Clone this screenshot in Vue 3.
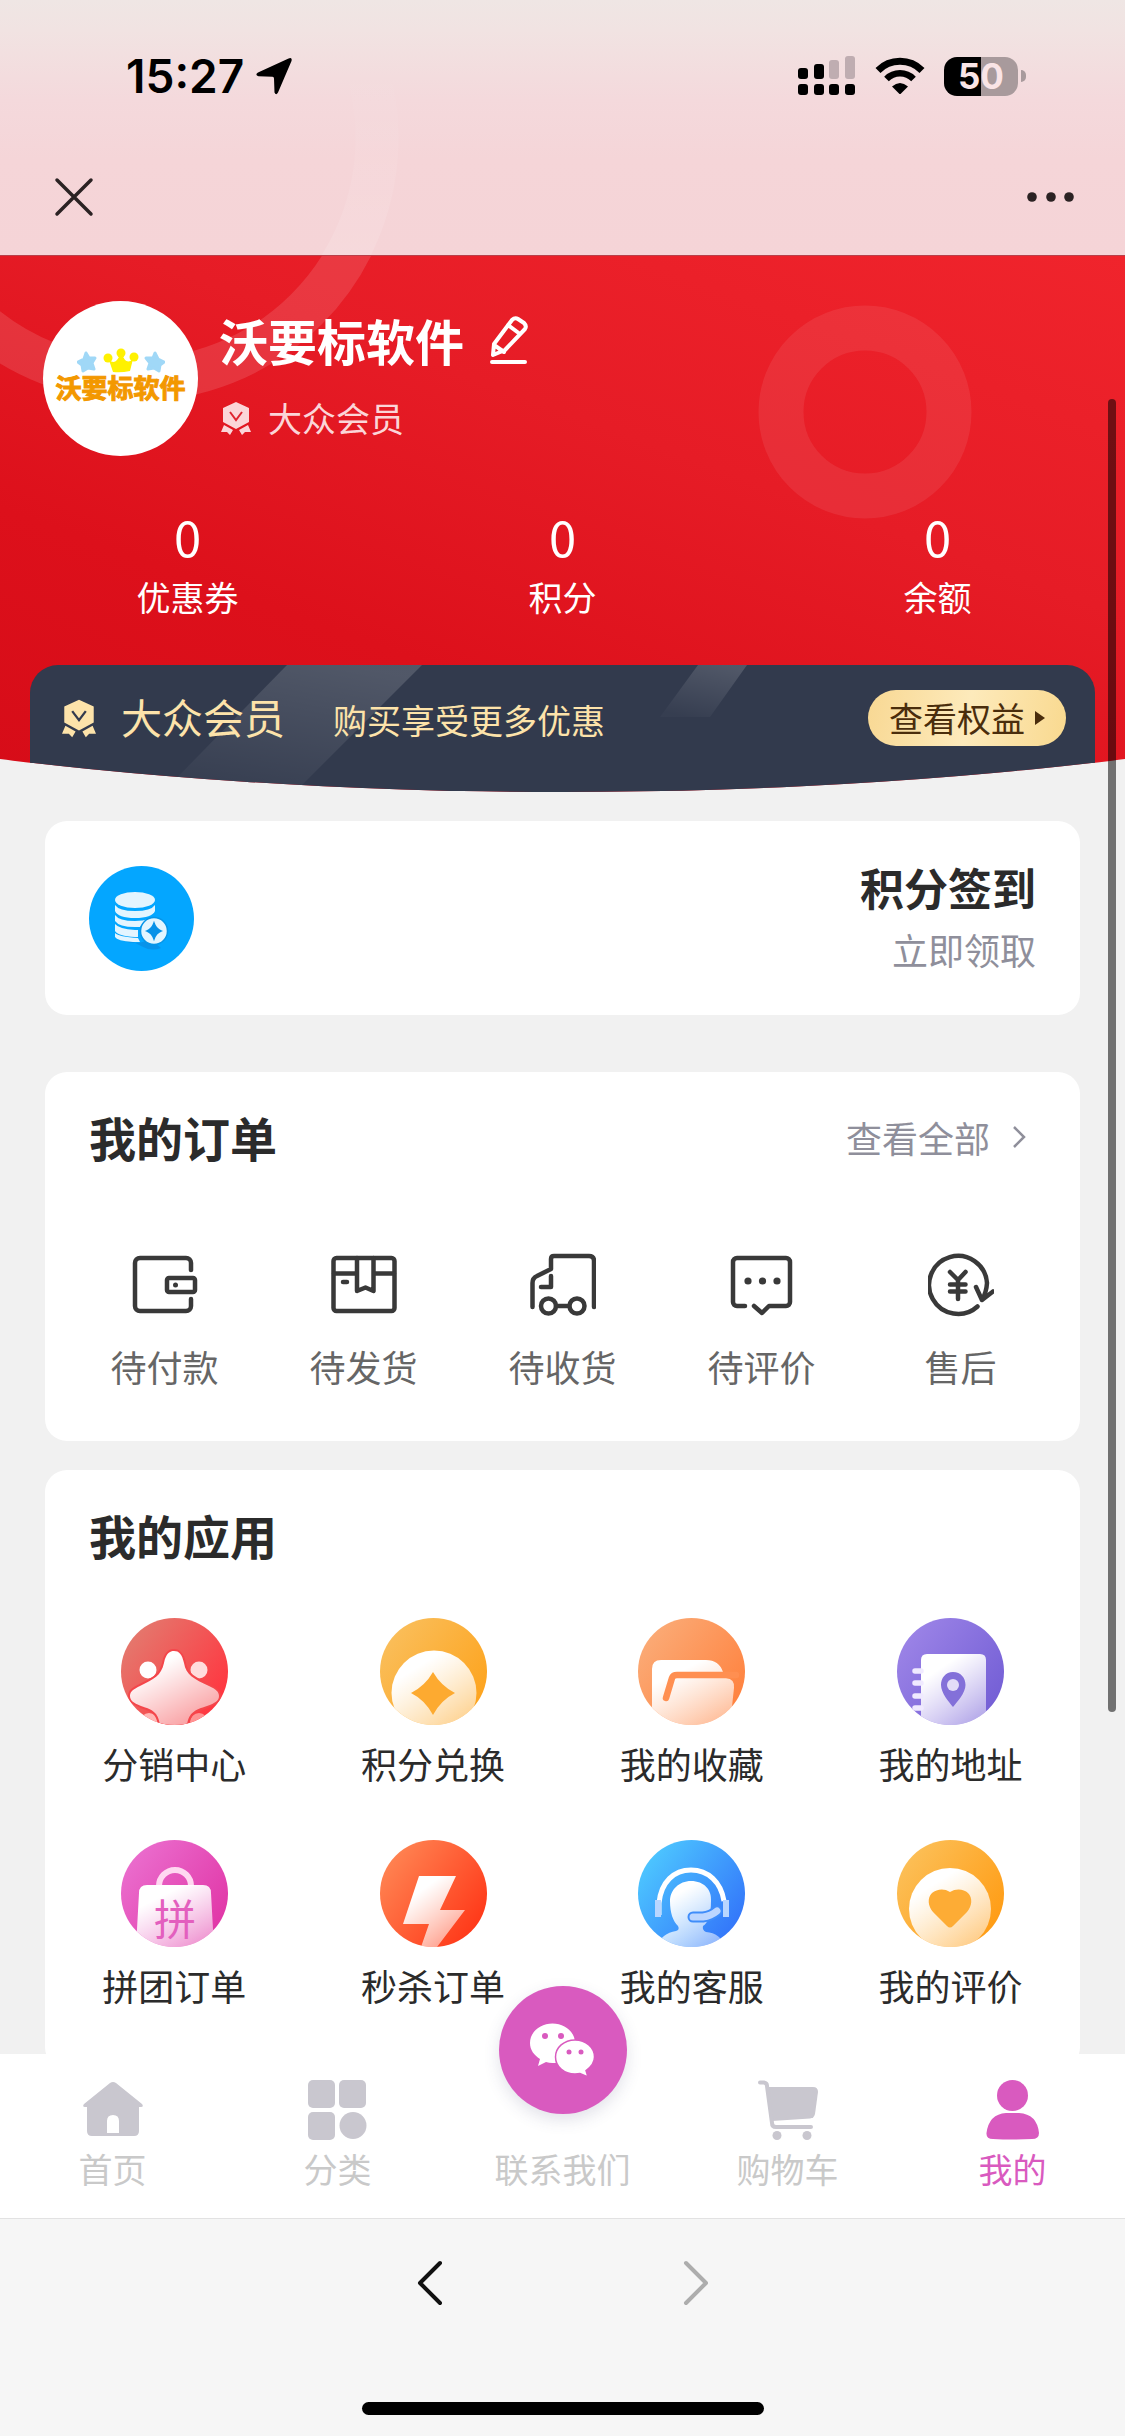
<script setup>
import { ref } from "vue";

const activeTab = ref("mine");

const stats = [
  { label: "优惠券", value: 0 },
  { label: "积分", value: 0 },
  { label: "余额", value: 0 }
];

const orders = [
  { key: "pay", label: "待付款" },
  { key: "ship", label: "待发货" },
  { key: "receive", label: "待收货" },
  { key: "review", label: "待评价" },
  { key: "refund", label: "售后" }
];

const apps = [
  { key: "agent", label: "分销中心", from: "#e5766c", to: "#ff3640" },
  { key: "points", label: "积分兑换", from: "#fabd58", to: "#fda41f" },
  { key: "favorite", label: "我的收藏", from: "#fba974", to: "#ff8340" },
  { key: "address", label: "我的地址", from: "#9a82e6", to: "#7560d6" },
  { key: "group", label: "拼团订单", from: "#ea6bcc", to: "#e138a8" },
  { key: "seckill", label: "秒杀订单", from: "#ff8150", to: "#ff3a1a" },
  { key: "service", label: "我的客服", from: "#4cc4ff", to: "#3478fa" },
  { key: "rate", label: "我的评价", from: "#fcbe55", to: "#ff9d16" }
];

const tabs = [
  { key: "home", label: "首页" },
  { key: "category", label: "分类" },
  { key: "contact", label: "联系我们" },
  { key: "cart", label: "购物车" },
  { key: "mine", label: "我的" }
];
</script>

<template>
  <div class="page">
    <header class="topbar">
      <svg class="topbar__ring" width="400" height="255" aria-hidden="true">
        <defs>
          <linearGradient id="ring-fade" gradientUnits="userSpaceOnUse" x1="0" y1="60" x2="0" y2="255">
            <stop offset="0" stop-color="#fff" stop-opacity="0" />
            <stop offset="1" stop-color="#fff" stop-opacity="0.120" />
          </linearGradient>
        </defs>
        <circle cx="136" cy="138" r="241" fill="none" stroke="url(#ring-fade)" stroke-width="43" />
      </svg>
      <div class="status">
        <div class="status__time">
          <span>15:27</span>
          <svg width="36" height="38" viewBox="0 0 36 38" aria-hidden="true">
            <path d="M32 1.800Q36.500 -.5 35.500 4L22 35.500Q20 39 18.500 35.500L18 21.500Q18 19.800 16.500 19.800L2.500 19.300Q-1.500 18 2 15.500Z" />
          </svg>
        </div>
        <div class="status__right">
          <svg width="58" height="40" viewBox="0 0 58 40" aria-hidden="true">
            <rect x="0" y="12" width="10" height="11" rx="3" />
            <rect x="16" y="8" width="10" height="15" rx="3" />
            <rect x="31" y="4" width="10" height="19" rx="3" fill="#bfadb1" />
            <rect x="47" y="0" width="10" height="23" rx="3" fill="#bfadb1" />
            <rect x="0" y="28" width="10" height="11" rx="3" />
            <rect x="16" y="28" width="10" height="11" rx="3" />
            <rect x="31" y="28" width="10" height="11" rx="3" />
            <rect x="47" y="28" width="10" height="11" rx="3" />
          </svg>
          <svg width="50" height="38" viewBox="0 0 50 38" aria-hidden="true">
            <path d="M3 13.500A31 31 0 0 1 47 13.500" fill="none" stroke="#000" stroke-width="7" />
            <path d="M11.500 22A19 19 0 0 1 38.500 22" fill="none" stroke="#000" stroke-width="6.500" />
            <path d="M17 29.500Q25 22.500 33 29.500L26 36.500Q25 37.500 24 36.500Z" />
          </svg>
          <div class="battery">
            <div class="battery__body">50</div>
            <div class="battery__tip"></div>
          </div>
        </div>
      </div>
      <div class="navbar">
        <button type="button" aria-label="关闭">
          <svg width="40" height="40" viewBox="0 0 40 40" fill="none" stroke="#2b2223" stroke-width="3.500" stroke-linecap="round">
            <path d="M3 3L37 37M37 3L3 37" />
          </svg>
        </button>
        <button type="button" aria-label="更多">
          <svg width="48" height="40" viewBox="0 0 48 40" fill="#2b2223">
            <circle cx="5" cy="20" r="4.800" />
            <circle cx="24" cy="20" r="4.800" />
            <circle cx="42" cy="20" r="4.800" />
          </svg>
        </button>
      </div>
    </header>

    <main class="content">
      <section class="hero">
        <svg class="hero__rings" width="100%" height="100%" aria-hidden="true">
          <g fill="none" stroke="#fff">
            <circle cx="136" cy="-117" r="241" stroke-opacity="0.12" stroke-width="43" />
            <circle cx="865" cy="156" r="84" stroke-opacity="0.08" stroke-width="45" />
          </g>
        </svg>
        <div class="profile">
          <div class="avatar">
            <svg width="88" height="26" viewBox="0 0 88 26" aria-hidden="true">
              <g fill="#a0d8f7" stroke="#a0d8f7" stroke-width="3" stroke-linejoin="round">
                <path d="M9 5l3 5 6 0-3 5 2 6-6-1-5 3-1-6-4-3 6-3z" />
                <path d="M78 5l-2 5-7 0 4 5-2 6 6-1 5 3 1-6 4-3-6-3z" />
              </g>
              <g fill="#fff100">
                <circle cx="44" cy="5" r="4.500" />
                <circle cx="31" cy="10" r="4.500" />
                <circle cx="57" cy="9" r="4.500" />
                <path d="M32 12Q39 18 43 6H45Q49 18 56 11L53 23Q44 25 36 24Z" />
              </g>
            </svg>
            <span class="avatar__text">沃要标软件</span>
          </div>
          <div class="profile__info">
            <div class="profile__name">
              <h1>沃要标软件</h1>
              <button type="button" aria-label="编辑资料">
                <svg width="38" height="48" viewBox="0 0 38 48" fill="none" stroke="#fff" stroke-width="4" stroke-linecap="round" stroke-linejoin="round">
                  <path d="M3 39L4 28L22 4Q25 1 28 3L34 7Q37 10 35 13L15 34ZM18 9L30 18M4 29L14 36M2 46H35" />
                </svg>
              </button>
            </div>
            <div class="profile__level">
              <svg width="30" height="33" viewBox="0 0 30 33" aria-hidden="true">
                <path d="M15 0L28 6V20L15 27L2 20V6ZM3 23L12 28 9 33 6 30 0 30ZM27 23L18 28 21 33 24 30 30 30Z" fill="#fbd5d8" />
                <path d="M9 10L15 18 21 10" fill="none" stroke="#df2430" stroke-width="2" />
              </svg>
              <span>大众会员</span>
            </div>
          </div>
        </div>

        <div class="stats">
          <a v-for="item in stats" :key="item.label" href="#" class="stats__item">
            <span class="stats__value">{{ item.value }}</span>
            <span class="stats__label">{{ item.label }}</span>
          </a>
        </div>

        <div class="vip">
          <svg class="vip__shine" width="1066" height="130" viewBox="0 0 1066 130" aria-hidden="true">
            <defs>
              <linearGradient id="shine" x1="0.700" y1="0" x2="0.300" y2="1">
                <stop offset="0" stop-color="#fff" stop-opacity="0.150" />
                <stop offset="1" stop-color="#fff" stop-opacity="0.020" />
              </linearGradient>
            </defs>
            <path d="M257 0H392L262 130H130Z" fill="url(#shine)" />
            <path d="M668 0H717L680 52H630Z" fill="url(#shine)" />
          </svg>
          <svg class="vip__medal" width="34" height="39" viewBox="0 0 30 33" aria-hidden="true">
            <path d="M15 0L28 6V20L15 27L2 20V6ZM3 23L12 28 9 33 6 30 0 30ZM27 23L18 28 21 33 24 30 30 30Z" fill="#fde3aa" />
            <path d="M9 10L15 18 21 10" fill="none" stroke="#333a4e" stroke-width="2" />
          </svg>
          <div class="vip__text">
            <strong>大众会员</strong>
            <span>购买享受更多优惠</span>
          </div>
          <button type="button" class="vip__button">
            查看权益
            <svg width="10" height="14" viewBox="0 0 10 14" aria-hidden="true"><path d="M0 0L10 7 0 14Z" fill="#4a2d0c" /></svg>
          </button>
        </div>
      </section>

      <a href="#" class="card sign">
        <svg width="105" height="105" viewBox="0 0 105 105" aria-hidden="true">
          <circle cx="52.500" cy="52.500" r="52.500" fill="#04a6ff" />
          <path d="M29 68Q34 77 46 77Q56 77 60 72L72 82Q62 86 52 80Z" fill="#0b87dc" opacity="0.600" />
          <g fill="#e3f5ff">
            <ellipse cx="46" cy="34" rx="20" ry="8" />
            <path d="M26 39Q30 45 46 45T66 39V45Q63 52 46 52T26 45Z" />
            <path d="M26 49Q30 55 46 55Q54 55 60 53Q54 56 51 61H46Q30 61 26 55Z" />
            <path d="M26 58Q30 63 46 64H49V71H46Q29 70 26 65Z" />
            <path d="M26 67Q30 71 49 72L51 76H44Q28 75 26 71Z" />
            <circle cx="65" cy="65" r="13.500" stroke="#0795e8" stroke-width="1.500" />
          </g>
          <path d="M65 57Q67 63 72 65Q67 67 65 73Q63 67 58 65Q63 63 65 57Z" fill="#0791e8" stroke="#0791e8" stroke-width="1.500" />
        </svg>
        <div class="sign__text">
          <strong>积分签到</strong>
          <span>立即领取</span>
        </div>
      </a>

      <section class="card orders">
        <div class="card__head">
          <h2>我的订单</h2>
          <a href="#" class="card__more">
            查看全部
            <svg width="14" height="24" viewBox="0 0 14 24" fill="none" stroke="#8f8f9b" stroke-width="2.500"><path d="M2 2L12 12 2 22" /></svg>
          </a>
        </div>
        <div class="orders__list">
          <a v-for="item in orders" :key="item.key" href="#" class="orders__item">
            <svg width="66" height="66" viewBox="0 0 66 66" fill="none" stroke="#393939" stroke-width="4.500" stroke-linecap="round" stroke-linejoin="round" aria-hidden="true">
              <template v-if="item.key === 'pay'">
                <path d="M59 18V11a5 5 0 0 0-5-5H8a5 5 0 0 0-5 5v43a5 5 0 0 0 5 5h46a5 5 0 0 0 5-5V47" />
                <rect x="35" y="26" width="28" height="14" rx="2" />
                <circle cx="43.500" cy="33" r="2.500" fill="#393939" stroke="none" />
              </template>
              <template v-else-if="item.key === 'ship'">
                <rect x="2.500" y="6" width="61" height="53" rx="3" />
                <path d="M3 21.500H25M43 21.500H63M26 6V39L34.500 35.500 42.500 39V6M12 30H16" />
              </template>
              <template v-else-if="item.key === 'receive'">
                <path d="M2.500 55V31Q2.500 26 7 24L21 17V7Q21 4 24 4H59Q64 4 64 9V55M21 24V35H11M26 54H39" />
                <circle cx="18.500" cy="54" r="7.500" />
                <circle cx="47" cy="54" r="7.500" />
              </template>
              <template v-else-if="item.key === 'review'">
                <path d="M16 54H8a4 4 0 0 1-4-4V10a4 4 0 0 1 4-4H57a4 4 0 0 1 4 4V50a4 4 0 0 1-4 4H40L33 61 25 54" />
                <g fill="#393939" stroke="none">
                  <circle cx="19" cy="29" r="3.600" />
                  <circle cx="33.500" cy="29" r="3.600" />
                  <circle cx="48" cy="29" r="3.600" />
                </g>
              </template>
              <template v-else>
                <path d="M49.500 54.500A29 29 0 1 1 59 31Q58.500 40 54 48M48 35L54 48 65 39.500" />
                <path d="M22 20L30 28 37.500 20M30 28V47M22 32.500H37.500M22 39.500H37.500" />
              </template>
            </svg>
            <span>{{ item.label }}</span>
          </a>
        </div>
      </section>

      <section class="card apps">
        <div class="card__head">
          <h2>我的应用</h2>
        </div>
        <div class="apps__grid">
          <a v-for="item in apps" :key="item.key" href="#" class="apps__item">
            <svg width="107" height="107" viewBox="0 0 107 107" aria-hidden="true">
              <defs>
                <linearGradient :id="`bg-${item.key}`" x1="0.100" y1="0.200" x2="0.900" y2="0.800">
                  <stop offset="0" :stop-color="item.from" />
                  <stop offset="1" :stop-color="item.to" />
                </linearGradient>
                <linearGradient :id="`fg-${item.key}`" x1="0.300" y1="0.200" x2="0.800" y2="1">
                  <stop offset="0" stop-color="#fff" />
                  <stop offset="1" stop-color="#fff" stop-opacity="0.450" />
                </linearGradient>
                <clipPath :id="`clip-${item.key}`"><circle cx="53.500" cy="53.500" r="53.500" /></clipPath>
              </defs>
              <g :clip-path="`url(#clip-${item.key})`">
                <rect width="107" height="107" :fill="`url(#bg-${item.key})`" />
                <g v-if="item.key === 'agent'">
                  <circle cx="27" cy="52" r="8.500" fill="#fff" />
                  <circle cx="78" cy="52" r="8.500" fill="#ffdcdc" />
                  <circle cx="28" cy="104" r="9" fill="#ffb7b5" />
                  <circle cx="78" cy="104" r="9" fill="#ff9393" />
                  <path d="M43 45C45 35 49 33 53 33C58 33 61 36 63 45C65 57 73 61 88 68C95 71 98 74 98 78C98 83 94 85 86 88C74 92 68 94 66 107H39C37 94 32 92 20 88C12 85 9 82 9 78C9 73 13 71 19 68C33 61 40 58 43 45Z" fill="#f4464b" stroke="#f4464b" stroke-width="4" />
                  <path d="M43 45C45 35 49 33 53 33C58 33 61 36 63 45C65 57 73 61 88 68C95 71 98 74 98 78C98 83 94 85 86 88C74 92 68 94 66 107H39C37 94 32 92 20 88C12 85 9 82 9 78C9 73 13 71 19 68C33 61 40 58 43 45Z" :fill="`url(#fg-${item.key})`" />
                </g>
                <template v-else-if="item.key === 'points'">
                  <circle cx="54" cy="75" r="42.500" :fill="`url(#fg-${item.key})`" />
                  <path d="M53 54Q61 68 75 75Q61 82 53 97Q45 82 31 75Q45 68 53 54Z" fill="#fdaa30" />
                </template>
                <template v-else-if="item.key === 'favorite'">
                  <path d="M14 107V51Q14 42 23 42H68Q81 42 85 54V60H88Q97 61 96 70L92 107Z" :fill="`url(#fg-${item.key})`" />
                  <path d="M28 80L34 60Q35 57 39 57H98" fill="none" stroke="#ff8f51" stroke-width="6.500" stroke-linecap="round" />
                </template>
                <template v-else-if="item.key === 'address'">
                  <path d="M24 107V42Q24 36 30 36H83Q89 36 89 42V107Z" :fill="`url(#fg-${item.key})`" />
                  <path d="M18 53H24M18 65H24M18 78H24M18 90H24" stroke="#f0eaff" stroke-width="5.500" stroke-linecap="round" />
                  <path d="M56 54C64 54 68.500 60 68.500 67C68.500 75 60 84 56 89C52 84 44 75 44 67C44 60 48.500 54 56 54Z" fill="#8370d9" />
                  <circle cx="56" cy="67" r="6" fill="#e3dcf8" />
                </template>
                <template v-else-if="item.key === 'group'">
                  <path d="M38 46A16 16 0 0 1 70 46" fill="none" stroke="#ffd8f1" stroke-width="6" />
                  <path d="M18 53Q18 45 26 45H82Q90 45 90 53L93 107H15Z" :fill="`url(#fg-${item.key})`" />
                  <text x="54" y="95" text-anchor="middle" class="apps__glyph">拼</text>
                </template>
                <path v-else-if="item.key === 'seckill'" d="M39 36H76L60 70H85L57 107H41L49 84H23Z" :fill="`url(#fg-${item.key})`" />
                <template v-else-if="item.key === 'service'">
                  <path d="M21 75V63C23 42 36 30 53 30C70 30 83 42 86 61" fill="none" stroke="#fff" stroke-width="5" />
                  <path d="M20 60V77M88 60V77" stroke="#b9d6ff" stroke-width="6" />
                  <path d="M53 41C66 41 74 50 73 61C73 75 70 83 65 86Q64 90 68 92Q82 93 88 107H18Q24 93 38 91Q42 90 40 86C35 81 32 73 32 61C32 50 41 41 53 41Z" :fill="`url(#fg-${item.key})`" />
                  <path d="M55 77H65Q73 76 79 71" fill="none" stroke="#3f8dfa" stroke-width="11" stroke-linecap="round" />
                  <path d="M55 77H65Q73 76 79 71" fill="none" stroke="#bcd6ff" stroke-width="7" stroke-linecap="round" />
                </template>
                <template v-else>
                  <circle cx="53" cy="69" r="41" :fill="`url(#fg-${item.key})`" />
                  <path d="M53 52C59 48 67 49 71 53C76 58 75 66 70 72L56 86Q53 89 50 86L36 72C31 66 30 58 35 53C40 49 47 48 53 52Z" fill="#fdac35" />
                </template>
              </g>
            </svg>
            <span>{{ item.label }}</span>
          </a>
        </div>
      </section>
    </main>

    <div class="scroll-thumb"></div>

    <nav class="tabbar">
      <button
        v-for="tab in tabs"
        :key="tab.key"
        type="button"
        class="tabbar__item"
        :class="{ 'is-active': tab.key === activeTab }"
        @click="activeTab = tab.key"
      >
        <span v-if="tab.key === 'contact'" class="tabbar__bubble">
          <svg width="128" height="128" viewBox="0 0 128 128" aria-hidden="true">
            <g fill="#fff">
              <path d="M53.500 37.500C66 37.500 76 46 76 57S66 77 53.500 77Q50 77 47 76L39 80L41 73C35 69 31 64 31 57C31 46 41 37.500 53.500 37.500Z" />
              <path d="M76 54C87 54 95.500 61.500 95.500 71C95.500 77 92 81 87 84.500L89 91L81 87.500Q79 88 76 88C65 88 56.500 80.500 56.500 71S65 54 76 54Z" stroke="#d95abf" stroke-width="1.500" />
            </g>
            <g fill="#d95abf">
              <circle cx="46" cy="50" r="3" />
              <circle cx="62" cy="50" r="3" />
              <circle cx="70" cy="66" r="2.500" />
              <circle cx="82" cy="66" r="2.500" />
            </g>
          </svg>
        </span>
        <svg v-else class="tabbar__icon" width="60" height="60" viewBox="0 0 60 60" fill="currentColor" aria-hidden="true">
          <path v-if="tab.key === 'home'" fill-rule="evenodd" d="M27 3Q30 1 33 3L59 24Q61 27 58 27H56V51Q56 56 51 56H9Q4 56 4 51V27H2Q-1 27 1 24ZM24 53H36V41Q36 35 30 35T24 41Z" />
          <template v-else-if="tab.key === 'category'">
            <rect width="27" height="28" rx="5" />
            <rect x="31" width="27" height="28" rx="5" />
            <rect y="32" width="27" height="28" rx="5" />
            <circle cx="45" cy="45.500" r="13.500" />
          </template>
          <template v-else-if="tab.key === 'cart'">
            <path d="M9 7H55Q60 7 60 12L57 34Q56 38 52 38.500L14 41Z" />
            <path d="M2 2.500H6Q9 3 9 6L14 43Q14 47 18 47H53" fill="none" stroke="currentColor" stroke-width="4" stroke-linecap="round" />
            <circle cx="19" cy="55.500" r="4.500" />
            <circle cx="49" cy="55.500" r="4.500" />
          </template>
          <template v-else>
            <circle cx="29.500" cy="15.500" r="15.500" />
            <path d="M23 33H36Q54 34 56 53Q56 59 49 59Q30 60 10 59Q3 59 3.500 53Q6 34 23 33Z" />
          </template>
        </svg>
        <span>{{ tab.label }}</span>
      </button>
    </nav>

    <footer class="browser">
      <div class="browser__nav">
        <button type="button" aria-label="后退">
          <svg width="26" height="46" viewBox="0 0 26 46" fill="none" stroke="#111" stroke-width="4" stroke-linecap="round" stroke-linejoin="round"><path d="M23 3L3 23 23 43" /></svg>
        </button>
        <button type="button" aria-label="前进" disabled>
          <svg width="26" height="46" viewBox="0 0 26 46" fill="none" stroke="#adadad" stroke-width="4" stroke-linecap="round" stroke-linejoin="round"><path d="M3 3L23 23 3 43" /></svg>
        </button>
      </div>
      <div class="browser__indicator"></div>
    </footer>
  </div>
</template>

<style>
body {
  margin: 0;
  background: #f1f1f1;
}
</style>

<style scoped>
.page {
  position: relative;
  display: flex;
  flex-direction: column;
  height: 100vh;
  overflow: hidden;
  background: #f1f1f1;
  color: #2b2b2b;
  font-family: "Noto Sans CJK SC", "Noto Sans", sans-serif;
}

button {
  padding: 0;
  border: 0;
  background: none;
  color: inherit;
  font: inherit;
  cursor: pointer;
}

a {
  color: inherit;
  text-decoration: none;
}

h1,
h2 {
  margin: 0;
}

svg {
  display: block;
  flex: none;
}

.topbar {
  position: relative;
  flex: none;
  box-sizing: border-box;
  height: 256px;
  border-bottom: 1px solid #b8404a;
  background: linear-gradient(#efe6e4 0, #f1e3e2 30px, #f4d9dc 100px, #f5d5d8 160px, #f5d4d7 100%);
}

.topbar__ring {
  position: absolute;
  top: 0;
  left: 0;
}

.status {
  position: relative;
  display: flex;
  align-items: center;
  justify-content: space-between;
  padding: 46px 99px 0 126px;
  height: 60px;
}

.status__time {
  display: flex;
  align-items: center;
  gap: 12px;
  color: #000;
  font-family: Inter, sans-serif;
  font-size: 46px;
  font-weight: 600;
}

.status__right {
  display: flex;
  align-items: center;
  gap: 19px;
}

.battery {
  display: flex;
  align-items: center;
  gap: 3px;
}

.battery__body {
  width: 74px;
  border-radius: 13px;
  background: linear-gradient(90deg, #000 50%, #a89a9c 50%);
  color: #f9e4e6;
  font-family: Inter, sans-serif;
  font-size: 35px;
  font-weight: 700;
  line-height: 39px;
  text-align: center;
}

.battery__tip {
  width: 5px;
  height: 12px;
  border-radius: 0 6px 6px 0;
  background: #a89a9c;
}

.navbar {
  position: relative;
  display: flex;
  justify-content: space-between;
  padding: 71px 50px 0 54px;
}

.content {
  flex: 1;
  min-height: 0;
  overflow-y: auto;
  scrollbar-width: none;
}

.hero {
  position: relative;
  padding-top: 45px;
  background: linear-gradient(200deg, #f0242c 0%, #e61c26 38%, #dd101b 70%, #d60c18 100%);
  clip-path: ellipse(145% 100% at 50% 0);
}

.hero__rings {
  position: absolute;
  top: 0;
  left: 0;
}

.profile {
  position: relative;
  display: flex;
  gap: 21px;
  padding: 0 43px;
}

.avatar {
  display: flex;
  flex-direction: column;
  align-items: center;
  box-sizing: border-box;
  width: 155px;
  height: 155px;
  padding-top: 47px;
  border-radius: 50%;
  background: #fff;
}

.avatar__text {
  color: #f39800;
  font-size: 26px;
  font-weight: 700;
  line-height: 26px;
  white-space: nowrap;
  -webkit-text-stroke: 1px #f39800;
}

.profile__info {
  display: flex;
  flex-direction: column;
  gap: 26px;
  padding-top: 9px;
  color: #fff;
}

.profile__name {
  display: flex;
  align-items: center;
  gap: 26px;
}

.profile__name h1 {
  font-size: 49px;
  font-weight: 700;
  line-height: 60px;
}

.profile__level {
  display: flex;
  align-items: center;
  gap: 17px;
  padding-left: 2px;
  color: #fbd5d8;
  font-size: 34px;
  line-height: 44px;
}

.stats {
  position: relative;
  display: grid;
  grid-template-columns: repeat(3, 1fr);
  margin-top: 50px;
}

.stats__item {
  display: flex;
  flex-direction: column;
  align-items: center;
  gap: 9px;
  color: #fff;
}

.stats__value {
  font-size: 49px;
  line-height: 60px;
}

.stats__label {
  font-size: 34px;
  line-height: 44px;
}

.vip {
  position: relative;
  display: flex;
  align-items: center;
  margin: 46px 30px 0;
  padding: 25px 29px 46px 32px;
  border-radius: 28px 28px 0 0;
  background: #323a4d;
  color: #fde3aa;
  overflow: hidden;
}

.vip__shine {
  position: absolute;
  top: 0;
  left: 0;
}

.vip__medal {
  position: relative;
}

.vip__text {
  position: relative;
  display: flex;
  flex: 1;
  align-items: baseline;
  gap: 48px;
  padding-left: 25px;
  line-height: 48px;
}

.vip__text strong {
  font-size: 41px;
  font-weight: 400;
}

.vip__text span {
  font-size: 34px;
}

.vip__button {
  position: relative;
  display: flex;
  align-items: center;
  justify-content: center;
  gap: 10px;
  width: 198px;
  border-radius: 28px;
  background: linear-gradient(100deg, #f8d893, #fdeabb 50%, #f9d98f);
  color: #4a2d0c;
  font-size: 34px;
  line-height: 56px;
}

.card {
  margin: 0 45px 29px;
  border-radius: 22px;
  background: #fff;
}

.sign {
  display: flex;
  align-items: center;
  justify-content: space-between;
  margin: 29px 45px 57px;
  padding: 36px 44px;
}

.sign__text {
  display: flex;
  flex-direction: column;
  gap: 8px;
  padding-bottom: 6px;
  text-align: right;
}

.sign__text strong {
  font-size: 44px;
  font-weight: 700;
  line-height: 60px;
}

.sign__text span {
  color: #8f8f9b;
  font-size: 36px;
  line-height: 48px;
}

.card__head {
  display: flex;
  align-items: center;
  justify-content: space-between;
  padding: 35px 54px 0 44px;
}

.card__head h2 {
  font-size: 47px;
  font-weight: 700;
  line-height: 60px;
}

.card__more {
  display: flex;
  align-items: center;
  gap: 22px;
  color: #8f8f9b;
  font-size: 36px;
  line-height: 48px;
}

.orders__list {
  display: grid;
  grid-template-columns: repeat(5, 1fr);
  padding: 85px 20px 51px;
}

.orders__item {
  display: flex;
  flex-direction: column;
  align-items: center;
  gap: 24px;
  color: #666;
  font-size: 36px;
  line-height: 48px;
}

.apps__grid {
  display: grid;
  grid-template-columns: repeat(4, 1fr);
  row-gap: 53px;
  padding: 53px 0 60px;
}

.apps__item {
  display: flex;
  flex-direction: column;
  align-items: center;
  gap: 14px;
  font-size: 36px;
  line-height: 48px;
}

.apps__glyph {
  fill: #e35fbe;
  font-size: 42px;
}

.scroll-thumb {
  position: absolute;
  top: 399px;
  right: 9px;
  bottom: 724px;
  width: 8px;
  border-radius: 4px;
  background: rgba(0, 0, 0, 0.53);
}

.tabbar {
  position: relative;
  display: grid;
  flex: none;
  grid-template-columns: repeat(5, 1fr);
  height: 164px;
  background: #fff;
}

.tabbar__item {
  position: relative;
  display: flex;
  flex-direction: column;
  align-items: center;
  justify-content: flex-end;
  gap: 7px;
  padding-bottom: 27px;
  color: #c9c9c9;
  font-size: 34px;
  line-height: 44px;
}

.tabbar__icon {
  color: #c9c7cf;
}

.tabbar__item.is-active,
.tabbar__item.is-active .tabbar__icon {
  color: #d95abf;
}

.tabbar__bubble {
  position: absolute;
  top: -68px;
  border-radius: 50%;
  background: #d95abf;
  box-shadow: 0 6px 16px rgba(60, 60, 110, 0.15);
}

.browser {
  display: flex;
  flex: none;
  flex-direction: column;
  align-items: center;
  justify-content: space-between;
  box-sizing: border-box;
  height: 218px;
  padding: 41px 0 21px;
  border-top: 1px solid #e2e2e2;
  background: #f6f6f6;
}

.browser__nav {
  display: flex;
  gap: 240px;
}

.browser__indicator {
  width: 402px;
  height: 13px;
  border-radius: 7px;
  background: #000;
}
</style>
